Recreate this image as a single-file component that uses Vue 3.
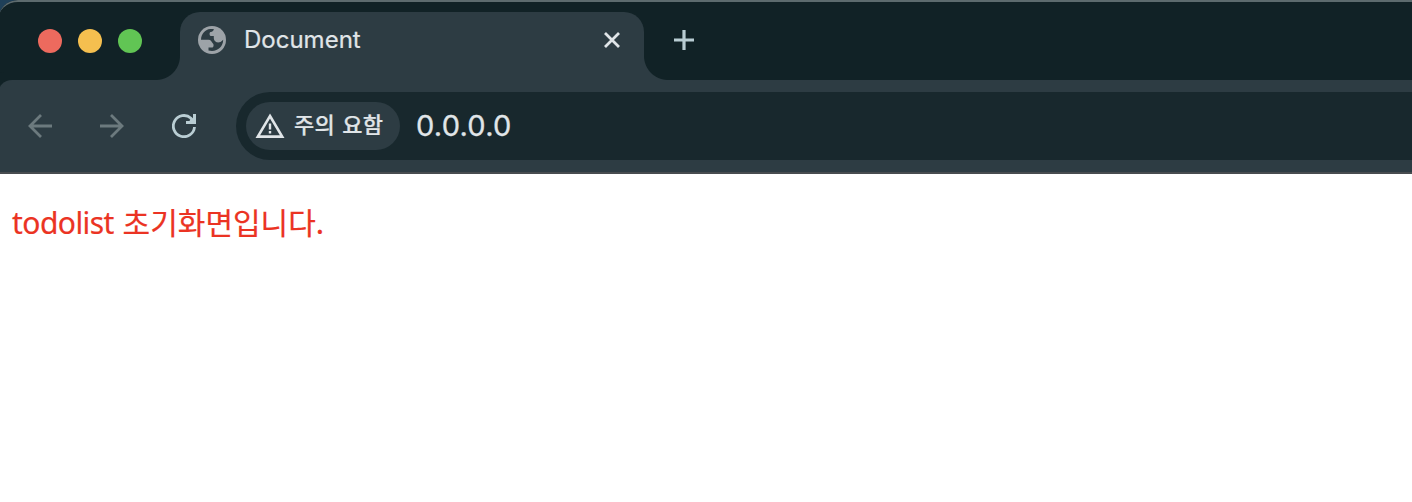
<script setup>
const lights = ['red', 'yellow', 'green']
</script>

<template>
  <div class="desktop">
    <div class="window">
      <header class="tabstrip">
        <div class="lights">
          <span v-for="c in lights" :key="c" class="light" :class="c"></span>
        </div>
        <div class="tab">
          <svg class="globe" width="28" height="28" viewBox="0 0 28 28">
            <circle cx="14" cy="14" r="14" fill="#9da3a8" />
            <path d="M3 13.7C3.2 8 7.5 3.6 12.2 3.1H15.8C15.6 5 14.7 5.8 12.5 6C11.2 6.2 11.4 9.5 12.5 9.9H15.8V12.2C15.8 15 18.5 16.8 21.5 16.3C23 16 24 14.9 25.2 13.8C25 20.5 20.3 24.8 14 25L10.5 24.6V21.6H13.8C15.6 21.4 16.2 18.8 14.9 17.4C13.5 15.8 13 13.7 10.5 13.7Z" fill="#2d3c43" />
          </svg>
          <span class="title">Document</span>
          <svg class="close" width="16" height="16" viewBox="0 0 16 16">
            <path d="M1 1L15 15M15 1L1 15" stroke="#e0e5e8" stroke-width="2.8" />
          </svg>
          <i class="flare left"></i>
          <i class="flare right"></i>
        </div>
        <svg class="plus" width="20" height="20" viewBox="0 0 20 20">
          <path d="M0 10H20M10 0V20" stroke="#b9cdd3" stroke-width="3.2" />
        </svg>
      </header>
      <nav class="toolbar">
        <svg width="24" height="24" viewBox="0 0 24 24">
          <path d="M24 12H2M13 1L2 12L13 23" fill="none" stroke="#6c7a7e" stroke-width="2.8" />
        </svg>
        <svg width="24" height="24" viewBox="0 0 24 24">
          <path d="M0 12H22M11 1L22 12L11 23" fill="none" stroke="#6c7a7e" stroke-width="2.8" />
        </svg>
        <svg width="24" height="24" viewBox="0 0 24 24">
          <path d="M22.5 13A10.6 10.6 0 1 1 19 4.2L22 8" fill="none" stroke="#b9cdd3" stroke-width="2.8" />
          <path d="M21 0H24V10H14V7H18L17.5 6L20 4L21 5Z" fill="#b9cdd3" />
        </svg>
        <div class="omnibox">
          <div class="chip">
            <svg width="30" height="26" viewBox="0 0 30 26">
              <path d="M15 3L27.2 23.6H2.8Z" fill="none" stroke="#e0e5e8" stroke-width="2.6" />
              <path d="M15 10.5V16.5M15 18V20.5" stroke="#e0e5e8" stroke-width="2.4" />
            </svg>
            <span class="chip-text">주의 요함</span>
          </div>
          <span class="url">0.0.0.0</span>
        </div>
      </nav>
      <main class="page">
        <p class="message"><span class="latin">todolist</span> 초기화면입니다.</p>
      </main>
    </div>
  </div>
</template>

<style>
body { margin: 0; overflow: hidden; }
</style>

<style scoped>
.desktop { width: 1412px; height: 502px; overflow: hidden; background: #1f4059; }
.window {
  box-sizing: border-box;
  width: 1432px;
  height: 502px;
  margin-left: -2px;
  border-radius: 20px 0 0 0;
  overflow: hidden;
  background: #2d3c43;
}
.tabstrip {
  box-sizing: border-box;
  display: flex;
  height: 80px;
  padding: 10px 0 0 40px;
  border-top: 2px solid #5d6b6e;
  border-radius: 20px 0 0 0;
  background: #112226;
}
.lights { display: flex; gap: 16px; width: 142px; padding-top: 17px; }
.light { width: 24px; height: 24px; border-radius: 50%; }
.red { background: #ed6a5e; }
.yellow { background: #f5bf4f; }
.green { background: #61c554; }
.tab {
  position: relative;
  box-sizing: border-box;
  display: flex;
  align-items: center;
  width: 464px;
  height: 68px;
  padding: 0 24px 12px 18px;
  border-radius: 20px 20px 0 0;
  background: #2d3c43;
}
.title {
  margin-left: 18px;
  color: #e0e5e8;
  font: 400 24px/30px Inter, sans-serif;
  -webkit-text-stroke: 0.2px #e0e5e8;
}
.close { margin-left: auto; }
.flare { position: absolute; bottom: 0; width: 24px; height: 24px; }
.flare.left { left: -24px; background: radial-gradient(circle at 0 0, #112226 23.5px, #2d3c43 24.5px); }
.flare.right { right: -24px; background: radial-gradient(circle at 100% 0, #112226 23.5px, #2d3c43 24.5px); }
.plus { margin: 18px 0 0 30px; }
.toolbar {
  box-sizing: border-box;
  display: flex;
  align-items: center;
  gap: 48px;
  height: 94px;
  padding-left: 30px;
  border-bottom: 2px solid #484c4f;
  border-radius: 14px 0 0 0;
  background: #2d3c43;
  box-shadow: -8px -8px 0 #112226;
}
.toolbar > svg { flex: none; }
.omnibox {
  box-sizing: border-box;
  display: flex;
  align-items: center;
  flex: 1;
  height: 68px;
  margin-left: -8px;
  padding-left: 10px;
  border-radius: 34px 0 0 34px;
  background: #18282d;
}
.chip {
  box-sizing: border-box;
  display: flex;
  align-items: center;
  width: 154px;
  height: 48px;
  padding-left: 9px;
  border-radius: 24px;
  background: #2d3c43;
}
.chip-text {
  margin-left: 9px;
  padding-bottom: 6px;
  color: #e0e5e8;
  font: 500 22px/30px "Noto Sans CJK KR", sans-serif;
  word-spacing: 2px;
  letter-spacing: 0.3px;
  -webkit-text-stroke: 0.2px #e0e5e8;
  white-space: nowrap;
}
.url {
  margin-left: 16px;
  color: #e0e5e8;
  font: 400 29px/36px Inter, sans-serif;
  letter-spacing: 0.25px;
  -webkit-text-stroke: 0.3px #e0e5e8;
}
.page { height: 328px; padding: 27px 0 0 14px; background: #fff; box-sizing: border-box; }
.message {
  margin: 0;
  color: #eb3323;
  font: 400 30px/40px "Noto Sans CJK KR", sans-serif;
  -webkit-text-stroke: 0.2px #eb3323;
  word-spacing: 2px;
  white-space: nowrap;
}
.latin { font: 400 30px/40px "Noto Sans", sans-serif; letter-spacing: -0.55px; }
</style>
